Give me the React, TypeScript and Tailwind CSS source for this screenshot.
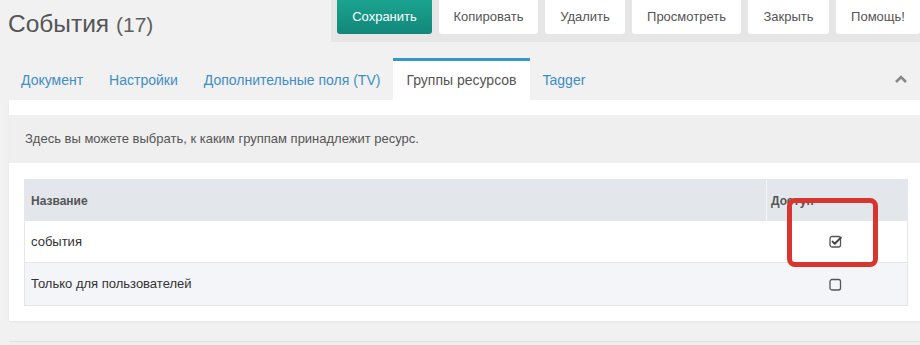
import React from 'react';

const buttons = [
  { label: 'Копировать', w: 'w-[99px]' },
  { label: 'Удалить', w: 'w-[80px]' },
  { label: 'Просмотреть', w: 'w-[109px]' },
  { label: 'Закрыть', w: 'w-[81px]' },
  { label: 'Помощь!', w: 'w-[84px]' },
];

const tabs = ['Документ', 'Настройки', 'Дополнительные поля (TV)', 'Группы ресурсов', 'Tagger'];

const rows = [
  { name: 'события', checked: true },
  { name: 'Только для пользователей', checked: false },
];

// чекбокс в стиле fa-check-square-o
const CheckBox = ({ checked }: { checked: boolean }) => (
  <svg width="14" height="13" viewBox="0 0 14 13" fill="none">
    <rect x="1" y="1.5" width="10.5" height="10.5" rx="2" stroke="#555" strokeWidth="1.3" />
    {checked && (
      <path d="M3.6 6.6 L5.8 8.8 L11.8 2.6" stroke="#444" strokeWidth="2" strokeLinecap="round" strokeLinejoin="round" />
    )}
  </svg>
);

export default function App() {
  return (
    <div className="relative w-[920px] h-[345px] overflow-hidden bg-[#f1f1f1] font-['Liberation_Sans',Arial,sans-serif]">
      {/* заголовок и панель кнопок */}
      <div className="flex h-[58px]">
        <h1 className="pl-[8px] pt-[9px] text-[24.5px] leading-[30px] text-[#555] font-normal">
          События <span className="text-[21px] text-[#5f5f5f]">(17)</span>
        </h1>
        <div className="ml-auto w-[589px] h-[42px] bg-[#e6e6e6] flex gap-[7px] pl-[6px] overflow-hidden">
          <button className="w-[95px] h-[34px] rounded-b-[3px] bg-gradient-to-b from-[#1ba390] to-[#11877a] text-white text-[13px] shrink-0">
            Сохранить
          </button>
          {buttons.map((b) => (
            <button key={b.label} className={`${b.w} h-[34px] rounded-b-[3px] bg-white text-[#555] text-[13px] shrink-0`}>
              {b.label}
            </button>
          ))}
        </div>
      </div>

      {/* вкладки */}
      <div className="flex items-stretch h-[42px] pl-[8px]">
        {tabs.map((t) => {
          const active = t === 'Группы ресурсов';
          return (
            <div
              key={t}
              className={
                active
                  ? 'px-[13px] flex items-center border-t-[3px] border-[#3697cd] bg-white text-[#555] text-[14px]'
                  : 'px-[13px] flex items-center border-t-[3px] border-transparent text-[#3e8ec4] text-[14px]'
              }
            >
              {t}
            </div>
          );
        })}
        <div className="ml-auto pr-[12px] flex items-center">
          <svg width="14" height="10" viewBox="0 0 14 10">
            <path d="M2 8 L7 3 L12 8" stroke="#888" strokeWidth="2.6" fill="none" />
          </svg>
        </div>
      </div>

      {/* панель */}
      <div className="ml-[9px] bg-white pt-[15px] pb-[15px] shadow-[0_1px_2px_rgba(0,0,0,0.06)]">
        <div className="h-[48px] bg-[#efefef] flex items-center px-[16px] text-[13px] text-[#555]">
          Здесь вы можете выбрать, к каким группам принадлежит ресурс.
        </div>
        <div className="mt-[16px] ml-[15px] w-[884px] border border-[#e6e6e6]">
          <div className="flex h-[41px] bg-[#e3e7eb] text-[12px] font-bold text-[#555]">
            <div className="w-[741px] flex items-center pl-[6px]">Название</div>
            <div className="flex-1 flex items-center pl-[4px] border-l border-[#f3f5f7]">Доступ</div>
          </div>
          {rows.map((r, i) => (
            <div
              key={r.name}
              className={
                i === 0
                  ? 'flex h-[42px] bg-white text-[13px] text-[#333] border-b border-[#e6e6e6]'
                  : 'flex h-[42px] bg-[#f4f5f8] text-[13px] text-[#333]'
              }
            >
              <div className="w-[741px] flex items-center pl-[6px]">{r.name}</div>
              <div className="flex-1 flex items-center justify-center pr-[2px]">
                <CheckBox checked={r.checked} />
              </div>
            </div>
          ))}
        </div>
      </div>

      <div className="mt-[20px] ml-[9px] h-[20px] bg-[#efefef] border-t border-[#e4e4e4]" />

      {/* красная рамка-выделение */}
      <div className="absolute left-[787px] top-[198px] w-[91px] h-[69px] border-[5px] border-[#d9352f] rounded-[8px]" />
    </div>
  );
}
